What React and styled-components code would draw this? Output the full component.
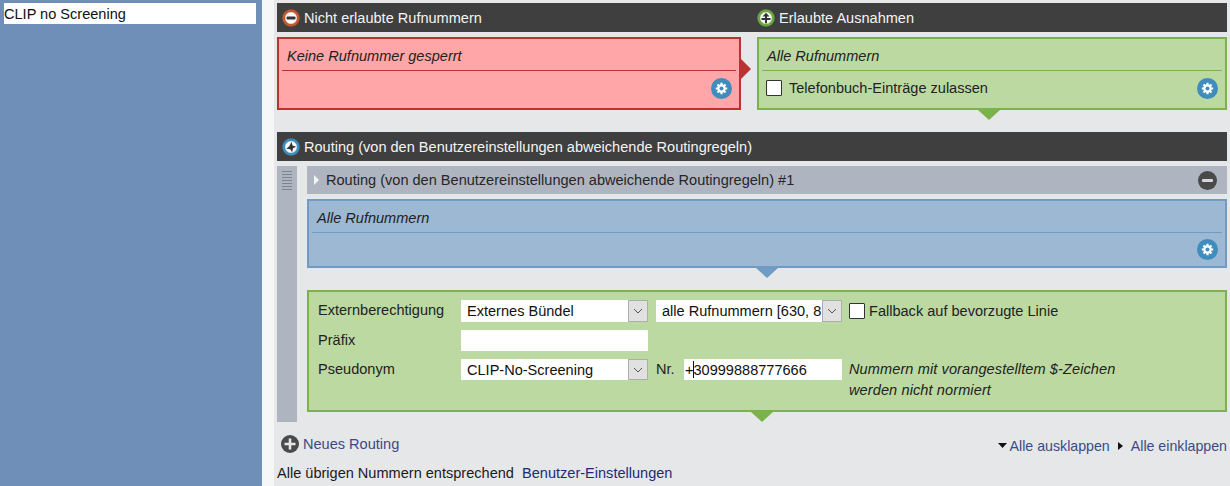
import styled, { createGlobalStyle } from 'styled-components';

const GlobalStyle = createGlobalStyle`
  html, body { margin: 0; padding: 0; height: 100%; overflow: hidden; }
  body { font-family: "Liberation Sans", Arial, sans-serif; font-size: 14.56px; color: #222; }
  * { box-sizing: border-box; }
`

const Page = styled.div`
  display: flex;
  width: 1230px;
  height: 486px;
`

const Sidebar = styled.aside`
  width: 262px;
  background: #6f8fb8;
  padding: 3px 6px 0 4px;
`

const NameInput = styled.input`
  display: block;
  width: 100%;
  height: 21px;
  border: 0;
  padding: 0;
  background: #fff;
  font: 14.56px "Liberation Sans", Arial, sans-serif;
  color: #111;
  outline: none;
`

const Main = styled.main`
  flex: 1;
  background: #e6e7e9;
  border-left: 12px solid #f6f6f6;
  padding: 3px 3px 0 3px;
`

const TopGrid = styled.section`
  display: grid;
  grid-template-columns: 464px 470px;
  column-gap: 16px;
  background: linear-gradient(#3f3f3f, #3f3f3f) top / 100% 29px no-repeat;
`

const HeadCell = styled.h2`
  display: flex;
  align-items: center;
  gap: 4px;
  height: 29px;
  margin: 0 0 5px;
  padding-left: ${p => p.$indent ?? 5}px;
  font-size: 14.56px;
  font-weight: normal;
  color: #f4f4f4;
`

const Bar = styled(HeadCell)`
  background: #3f3f3f;
  margin: 22px 0 5px;
`

const Box = styled.div`
  position: relative;
  height: ${p => p.$height || 73}px;
  padding: 0 3px;
  border: 2px solid ${p => p.$border};
  background: ${p => p.$bg};
`

const BoxTitle = styled.div`
  height: 32px;
  padding: 8px 0 0 5px;
  border-bottom: 1px solid ${p => p.$line};
  font-style: italic;
  line-height: 18px;
  color: #222;
`

const BoxBody = styled.div`
  display: flex;
  align-items: center;
  justify-content: space-between;
  height: ${p => p.$height || 34}px;
  padding: 0 0 0 4px;
`

const Pointer = styled.span`
  position: absolute;
  width: 0;
  height: 0;
  ${p => p.$side === 'right' ? `
    top: 20px;
    right: -12px;
    border-top: 10px solid transparent;
    border-bottom: 10px solid transparent;
    border-left: 10px solid ${p.$color};
  ` : `
    bottom: -12px;
    left: ${p.$left}px;
    border-left: 11px solid transparent;
    border-right: 11px solid transparent;
    border-top: 10px solid ${p.$color};
  `}
`

const CheckLabel = styled.label`
  display: flex;
  align-items: center;
  gap: ${p => p.$gap || 7}px;
  color: #222;
`

const Check = styled.input.attrs({ type: 'checkbox' })`
  appearance: none;
  width: 16px;
  height: 16px;
  margin: 0;
  background: #fff;
  border: 1px solid #333;
  border-radius: 1px;
`

const GearSlot = styled.span`
  display: flex;
  margin-left: auto;
  margin-right: 4px;
`

const RoutingArea = styled.div`
  display: grid;
  grid-template-columns: 20px 920px;
  column-gap: 10px;
`

const Handle = styled.div`
  height: 256px;
  background: #aeb5c1;
  padding: 5px 5px 0;
`

const Grip = styled.div`
  height: 21px;
  background: repeating-linear-gradient(#7d8490 0 1px, transparent 1px 3px);
`

const RuleHead = styled.div`
  display: flex;
  align-items: center;
  gap: 7px;
  height: 28px;
  margin-bottom: 5px;
  padding: 0 10px 0 7px;
  background: #aeb5c1;
  color: #262626;
`

const Caret = styled.span`
  width: 0;
  height: 0;
  border-top: 5px solid transparent;
  border-bottom: 5px solid transparent;
  border-left: 5px solid #f3f4f6;
`

const RuleName = styled.span`
  flex: 1;
`

const FormBox = styled(Box)`
  margin-top: 22px;
  padding: 8px 0 0 9px;
`

const FormGrid = styled.div`
  display: grid;
  grid-template-columns: 143px 195px 28px 158px 1fr;
  grid-template-rows: 30px 29px auto;
  align-items: start;
`

const FieldLabel = styled.span`
  line-height: 21px;
  color: #222;
`

const SelectWrap = styled.div`
  position: relative;
  width: ${p => p.$width}px;
  height: ${p => p.$height || 22}px;
  grid-column: ${p => p.$column || 'auto'};
`

const Select = styled.select`
  appearance: none;
  display: block;
  width: 100%;
  height: 100%;
  border: 0;
  border-radius: 0;
  padding: 0 20px 0 6px;
  background: #fff;
  font: 14.56px "Liberation Sans", Arial, sans-serif;
  color: #111;
`

const SelectArrow = styled.span`
  position: absolute;
  top: 0;
  right: 0;
  display: flex;
  align-items: center;
  justify-content: center;
  width: 20px;
  height: 100%;
  background: #e1e1e1;
  border: 1px solid #adadad;
`

const TextField = styled.input`
  display: block;
  width: ${p => p.$width}px;
  height: 21px;
  border: 0;
  padding: 0 0 0 1px;
  background: #fff;
  font: 14.56px "Liberation Sans", Arial, sans-serif;
  color: #111;
  outline: none;
`

const FieldWrap = styled.div`
  position: relative;
  grid-column: ${p => p.$column || 'auto'};
`

const TextCursor = styled.span`
  position: absolute;
  top: 2px;
  left: 9px;
  width: 1px;
  height: 17px;
  background: #111;
`

const Note = styled.div`
  padding-left: 7px;
  font-style: ${p => p.$plain ? 'normal' : 'italic'};
  letter-spacing: ${p => p.$plain ? 0 : 0.1}px;
  line-height: ${p => p.$plain ? 22 : 21}px;
  color: #222;
  white-space: nowrap;
`

const Actions = styled.div`
  display: flex;
  align-items: center;
  justify-content: space-between;
  height: 22px;
  margin-top: 11px;
  padding: 2px 0 0 4px;
`

const Link = styled.a`
  color: ${p => p.$dark ? '#1c2a78' : '#3b4a86'};
  text-decoration: none;
`

const ActionLink = styled.span`
  display: inline-flex;
  align-items: center;
  gap: ${p => p.$gap || 4}px;
`

const RightActions = styled.div`
  display: flex;
  gap: 6px;
  font-size: 14.2px;
`

const Remaining = styled.div`
  margin-top: 9px;
  line-height: 18px;
  color: #1a1a1a;
`

const RoundIcon = ({ id, ring, children }) => (
  <svg width="18" height="18" viewBox="0 0 18 18">
    <defs>
      <radialGradient id={id}>
        <stop offset="58%" stopColor="#fafafa" />
        <stop offset="72%" stopColor={ring} />
        <stop offset="90%" stopColor={ring} />
        <stop offset="100%" stopColor={ring} stopOpacity="0.2" />
      </radialGradient>
    </defs>
    <circle cx="9" cy="9" r="9" fill={`url(#${id})`} />
    {children}
  </svg>
)

const GearIcon = () => (
  <svg width="21" height="21" viewBox="0 0 21 21">
    <circle cx="10.5" cy="10.5" r="10.5" fill="#3f8dbd" />
    <g stroke="#fff" strokeWidth="2.2">
      <path d="M10.5 4.8v11.4M4.8 10.5h11.4M6.5 6.5l8 8M14.5 6.5l-8 8" />
    </g>
    <circle cx="10.5" cy="10.5" r="4.2" fill="#fff" />
    <circle cx="10.5" cy="10.5" r="2" fill="#3f8dbd" />
  </svg>
)

const Chevron = () => (
  <svg width="10" height="6" viewBox="0 0 10 6">
    <path d="M1 1l4 4 4-4" fill="none" stroke="#555" strokeWidth="1" />
  </svg>
)

const MinusDisc = () => (
  <svg width="19" height="19" viewBox="0 0 19 19">
    <circle cx="9.5" cy="9.5" r="9.5" fill="#4a4a4a" />
    <rect x="4" y="8" width="11" height="3" rx="1" fill="#d4d6da" />
  </svg>
)

const PlusDisc = () => (
  <svg width="18" height="18" viewBox="0 0 18 18">
    <circle cx="9" cy="9" r="9" fill="#4a4a4a" />
    <path d="M9 3.5v11M3.5 9h11" stroke="#e8e8e8" strokeWidth="2.6" />
  </svg>
)

const Tri = ({ dir }) => (
  <svg width="9" height="8" viewBox="0 0 9 8">
    <path d={dir === 'down' ? 'M0 1h9L4.5 6z' : 'M2 0l5 4-5 4z'} fill="#111" />
  </svg>
)

function App() {
  return (
    <Page>
      <GlobalStyle />
      <Sidebar>
        <NameInput defaultValue="CLIP no Screening" />
      </Sidebar>
      <Main>
        <TopGrid>
          <HeadCell>
            <RoundIcon id="ringRed" ring="#c4582c">
              <rect x="4.5" y="7.5" width="9" height="3" rx="1" fill="#333" />
            </RoundIcon>
            Nicht erlaubte Rufnummern
          </HeadCell>
          <HeadCell $indent={0}>
            <RoundIcon id="ringGreen" ring="#6aa83f">
              <path d="M9 3.8l3.5 3.7H10V9h3.5v2H10v3.2H8V11H4.5V9H8V7.5H5.5z" fill="#333" />
            </RoundIcon>
            Erlaubte Ausnahmen
          </HeadCell>
          <Box $border="#b93333" $bg="#ffa6a9">
            <BoxTitle $line="#b93333">Keine Rufnummer gesperrt</BoxTitle>
            <BoxBody>
              <GearSlot><GearIcon /></GearSlot>
            </BoxBody>
            <Pointer $side="right" $color="#b93333" />
          </Box>
          <Box $border="#7cb24c" $bg="#bcd9a1">
            <BoxTitle $line="#7cb24c">Alle Rufnummern</BoxTitle>
            <BoxBody>
              <CheckLabel $gap={7}>
                <Check />
                Telefonbuch-Einträge zulassen
              </CheckLabel>
              <GearSlot><GearIcon /></GearSlot>
            </BoxBody>
            <Pointer $color="#7cb24c" $left={219} />
          </Box>
        </TopGrid>

        <Bar>
          <RoundIcon id="ringBlue" ring="#3f8dbd">
            <path d="M9.5 3.8l1 3.7 3.700 1.200-3.200 1.500-.8 4-2-3-3.900-.5 3-2.500z" fill="#333" />
          </RoundIcon>
          Routing (von den Benutzereinstellungen abweichende Routingregeln)
        </Bar>

        <RoutingArea>
          <Handle><Grip /></Handle>
          <div>
            <RuleHead>
              <Caret />
              <RuleName>Routing (von den Benutzereinstellungen abweichende Routingregeln) #1</RuleName>
              <MinusDisc />
            </RuleHead>
            <Box $height={69} $border="#6f9bc4" $bg="#9db8d2">
              <BoxTitle $line="#6f9bc4">Alle Rufnummern</BoxTitle>
              <BoxBody $height={32}>
                <GearSlot><GearIcon /></GearSlot>
              </BoxBody>
              <Pointer $color="#6f9bc4" $left={447} />
            </Box>
            <FormBox $height={122} $border="#7cb24c" $bg="#bcd9a1">
              <FormGrid>
                <FieldLabel>Externberechtigung</FieldLabel>
                <SelectWrap $width={187}>
                  <Select defaultValue="bundle">
                    <option value="bundle">Externes Bündel</option>
                  </Select>
                  <SelectArrow><Chevron /></SelectArrow>
                </SelectWrap>
                <SelectWrap $width={186} $column="3 / 5">
                  <Select defaultValue="all">
                    <option value="all">alle Rufnummern [630, 8</option>
                  </Select>
                  <SelectArrow><Chevron /></SelectArrow>
                </SelectWrap>
                <Note $plain>
                  <CheckLabel $gap={4}>
                    <Check />
                    Fallback auf bevorzugte Linie
                  </CheckLabel>
                </Note>

                <FieldLabel>Präfix</FieldLabel>
                <FieldWrap $column="2 / 6">
                  <TextField $width={187} />
                </FieldWrap>

                <FieldLabel>Pseudonym</FieldLabel>
                <SelectWrap $width={187} $height={21}>
                  <Select defaultValue="clip">
                    <option value="clip">CLIP-No-Screening</option>
                  </Select>
                  <SelectArrow><Chevron /></SelectArrow>
                </SelectWrap>
                <FieldLabel>Nr.</FieldLabel>
                <FieldWrap>
                  <TextField $width={158} defaultValue="+30999888777666" />
                  <TextCursor />
                </FieldWrap>
                <Note>
                  Nummern mit vorangestelltem $-Zeichen<br />werden nicht normiert
                </Note>
              </FormGrid>
              <Pointer $color="#7cb24c" $left={442} />
            </FormBox>
          </div>
        </RoutingArea>

        <Actions>
          <Link href="#">
            <ActionLink>
              <PlusDisc />
              Neues Routing
            </ActionLink>
          </Link>
          <RightActions>
            <Link href="#">
              <ActionLink $gap={3}><Tri dir="down" />Alle ausklappen</ActionLink>
            </Link>
            <Link href="#">
              <ActionLink $gap={6}><Tri dir="right" />Alle einklappen</ActionLink>
            </Link>
          </RightActions>
        </Actions>

        <Remaining>
          Alle übrigen Nummern entsprechend&nbsp; <Link href="#" $dark>Benutzer-Einstellungen</Link>
        </Remaining>
      </Main>
    </Page>
  );
}

export default App;
